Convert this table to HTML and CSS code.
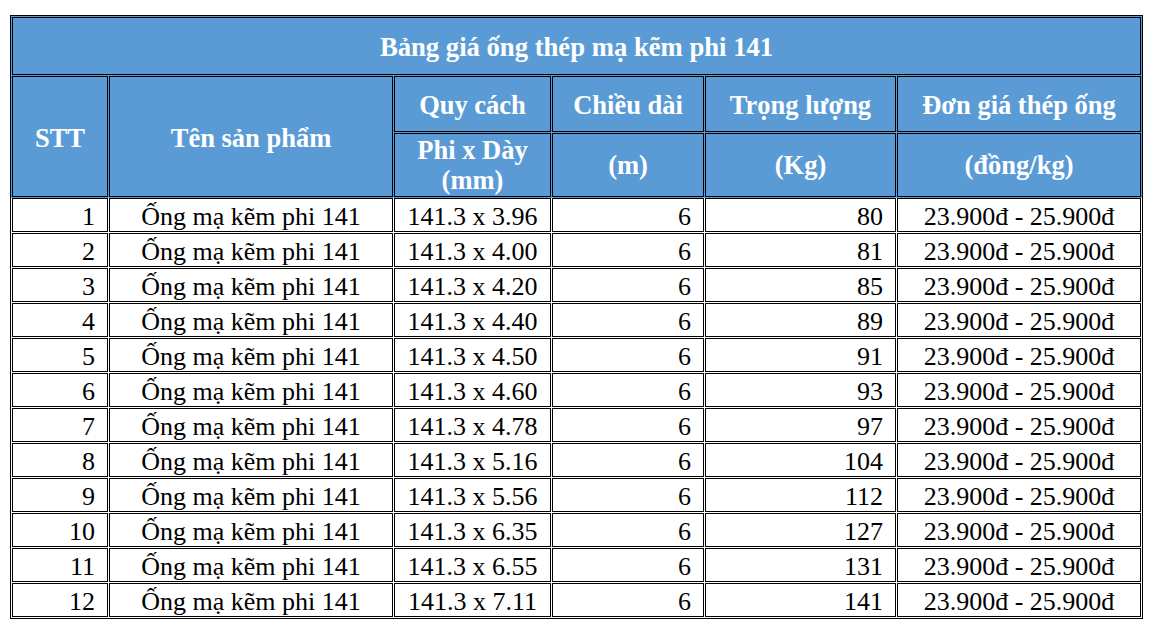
FILE: index.html
```html
<!DOCTYPE html>
<html lang="vi">
<head>
<meta charset="utf-8">
<title>Bảng giá ống thép mạ kẽm phi 141</title>
<link rel="stylesheet" href="styles.css">
</head>
<body>
<table class="price">
  <colgroup>
    <col class="c-stt">
    <col class="c-name">
    <col class="c-spec">
    <col class="c-len">
    <col class="c-wt">
    <col class="c-price">
  </colgroup>
  <thead>
    <tr class="row-title">
      <th colspan="6">Bảng giá ống thép mạ kẽm phi 141</th>
    </tr>
    <tr class="row-head1">
      <th rowspan="2">STT</th>
      <th rowspan="2">Tên sản phẩm</th>
      <th>Quy cách</th>
      <th>Chiều dài</th>
      <th>Trọng lượng</th>
      <th>Đơn giá thép ống</th>
    </tr>
    <tr class="row-head2">
      <th>Phi x Dày (mm)</th>
      <th>(m)</th>
      <th>(Kg)</th>
      <th>(đồng/kg)</th>
    </tr>
  </thead>
  <tbody>
    <tr><td class="r">1</td><td class="c">Ống mạ kẽm phi 141</td><td class="c">141.3 x 3.96</td><td class="r">6</td><td class="r">80</td><td class="c">23.900đ - 25.900đ</td></tr>
    <tr><td class="r">2</td><td class="c">Ống mạ kẽm phi 141</td><td class="c">141.3 x 4.00</td><td class="r">6</td><td class="r">81</td><td class="c">23.900đ - 25.900đ</td></tr>
    <tr><td class="r">3</td><td class="c">Ống mạ kẽm phi 141</td><td class="c">141.3 x 4.20</td><td class="r">6</td><td class="r">85</td><td class="c">23.900đ - 25.900đ</td></tr>
    <tr><td class="r">4</td><td class="c">Ống mạ kẽm phi 141</td><td class="c">141.3 x 4.40</td><td class="r">6</td><td class="r">89</td><td class="c">23.900đ - 25.900đ</td></tr>
    <tr><td class="r">5</td><td class="c">Ống mạ kẽm phi 141</td><td class="c">141.3 x 4.50</td><td class="r">6</td><td class="r">91</td><td class="c">23.900đ - 25.900đ</td></tr>
    <tr><td class="r">6</td><td class="c">Ống mạ kẽm phi 141</td><td class="c">141.3 x 4.60</td><td class="r">6</td><td class="r">93</td><td class="c">23.900đ - 25.900đ</td></tr>
    <tr><td class="r">7</td><td class="c">Ống mạ kẽm phi 141</td><td class="c">141.3 x 4.78</td><td class="r">6</td><td class="r">97</td><td class="c">23.900đ - 25.900đ</td></tr>
    <tr><td class="r">8</td><td class="c">Ống mạ kẽm phi 141</td><td class="c">141.3 x 5.16</td><td class="r">6</td><td class="r">104</td><td class="c">23.900đ - 25.900đ</td></tr>
    <tr><td class="r">9</td><td class="c">Ống mạ kẽm phi 141</td><td class="c">141.3 x 5.56</td><td class="r">6</td><td class="r">112</td><td class="c">23.900đ - 25.900đ</td></tr>
    <tr><td class="r">10</td><td class="c">Ống mạ kẽm phi 141</td><td class="c">141.3 x 6.35</td><td class="r">6</td><td class="r">127</td><td class="c">23.900đ - 25.900đ</td></tr>
    <tr><td class="r">11</td><td class="c">Ống mạ kẽm phi 141</td><td class="c">141.3 x 6.55</td><td class="r">6</td><td class="r">131</td><td class="c">23.900đ - 25.900đ</td></tr>
    <tr><td class="r">12</td><td class="c">Ống mạ kẽm phi 141</td><td class="c">141.3 x 7.11</td><td class="r">6</td><td class="r">141</td><td class="c">23.900đ - 25.900đ</td></tr>
  </tbody>
</table>
</body>
</html>
```

FILE: styles.css
```css
html, body {
  margin: 0;
  padding: 0;
  background: #ffffff;
}

body {
  padding: 15px 0 0 10px;
  font-family: "Liberation Serif", "Times New Roman", serif;
  font-size: 26px;
  line-height: 30px;
  color: #000000;
}

.price {
  width: 1133px;
  table-layout: fixed;
  border-collapse: separate;
  border-spacing: 1px;
  border: 1px solid #000000;
  background: #ffffff;
}

.c-stt { width: 96px; }
.c-name { width: 284px; }
.c-spec { width: 157px; }
.c-len { width: 152px; }
.c-wt { width: 191px; }
.c-price { width: 244px; }

.price th,
.price td {
  border: 1px solid #000000;
  vertical-align: middle;
}

.price th {
  background: #5b9bd5;
  color: #ffffff;
  font-size: 26.5px;
  font-weight: bold;
  text-align: center;
  box-shadow: 0 0 0 1px #5b9bd5;
  padding: 2px 4px 0;
}

.row-title th {
  height: 54px;
  font-size: 26.67px;
}

.row-head1 th {
  height: 52px;
}

.row-head2 th {
  padding: 1px 4px;
}

.price td {
  height: 29px;
  line-height: 29px;
  padding: 3px 12px 0;
  white-space: nowrap;
}

.price td.r {
  text-align: right;
}

.price td.c {
  text-align: center;
}
```
